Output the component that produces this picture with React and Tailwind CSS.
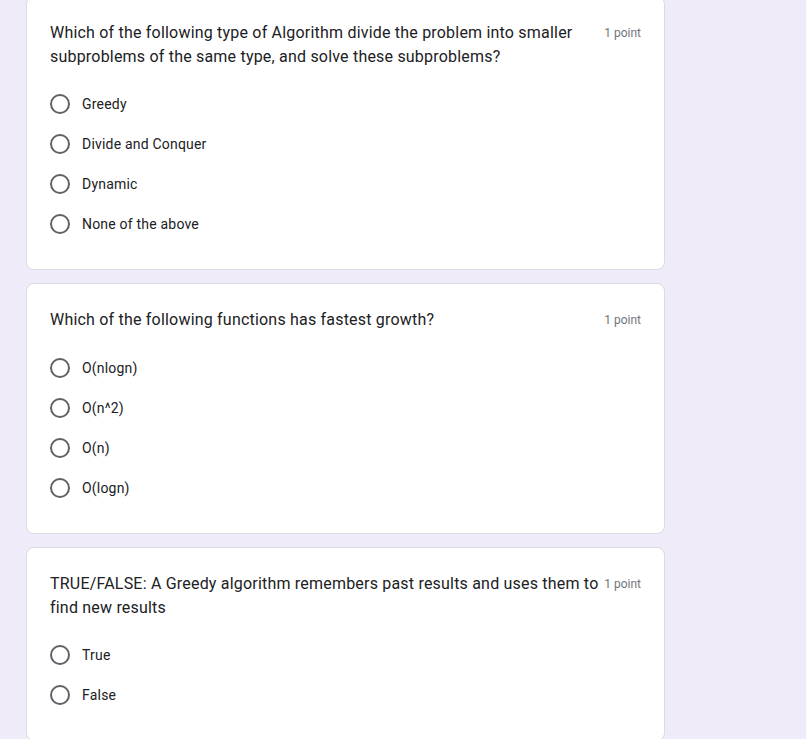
import React from "react";

const questions = [
  {
    title: "Which of the following type of Algorithm divide the problem into smaller subproblems of the same type, and solve these subproblems?",
    options: ["Greedy", "Divide and Conquer", "Dynamic", "None of the above"],
    wrap: true,
  },
  {
    title: "Which of the following functions has fastest growth?",
    options: ["O(nlogn)", "O(n^2)", "O(n)", "O(logn)"],
    wrap: false,
  },
  {
    title: "TRUE/FALSE: A Greedy algorithm remembers past results and uses them to find new results",
    options: ["True", "False"],
    wrap: true,
  },
];

function Card({ q }) {
  return (
    <div className="bg-white border border-[#dadce0] rounded-[8px] px-[23px] pt-[24px] pb-[25px]">
      <div className="flex items-start">
        <div className="flex-1 text-[16px] leading-[24px] text-[#202124] tracking-[0.2px]" style={{ fontFamily: "Roboto, 'Noto Sans', sans-serif" }}>
          {q.title}
        </div>
        <div className="pl-[4px] text-[12px] leading-[24px] text-[#70757a] whitespace-nowrap" style={{ fontFamily: "Roboto, sans-serif" }}>
          1 point
        </div>
      </div>
      <div className={q.wrap ? "mt-[15px] flex flex-col" : "mt-[16px] flex flex-col"}>
        {q.options.map((o) => (
          <div key={o} className="flex items-center h-[40px]">
            <div className="w-[20px] h-[20px] rounded-full border-2 border-[#5f6368]" />
            <span className="ml-[12px] text-[14px] text-[#202124] tracking-[0.2px]" style={{ fontFamily: "Roboto, sans-serif" }}>
              {o}
            </span>
          </div>
        ))}
      </div>
    </div>
  );
}

export default function App() {
  return (
    <div className="w-[806px] h-[739px] overflow-hidden bg-[#f0ebf8]">
      <div className="ml-[26px] w-[639px] -mt-[4px] flex flex-col gap-[13px]">
        {questions.map((q, i) => (
          <Card key={i} q={q} />
        ))}
      </div>
    </div>
  );
}
